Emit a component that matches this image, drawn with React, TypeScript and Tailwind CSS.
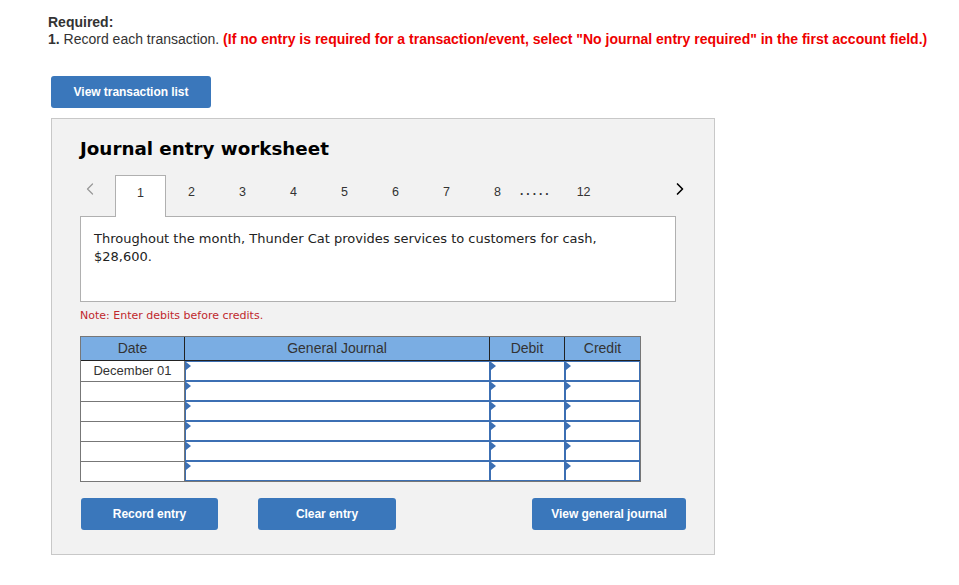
import { ChevronLeft, ChevronRight } from 'lucide-react';

const tabs = ['1', '2', '3', '4', '5', '6', '7', '8'];
const rows = ['December 01', '', '', '', '', ''];

const BlueButton = ({ label, width }: { label: string; width: string }) => (
  <button
    className={`${width} h-8 rounded-[3px] bg-[#3a77bb] text-white text-[12px] font-bold tracking-[-0.05px] font-['Liberation_Sans',Arial,sans-serif]`}
  >
    {label}
  </button>
);

const InputCell = ({ width }: { width: string }) => (
  <div className={`${width} relative h-5 bg-white border border-[#3c6fb3]`}>
    <span className="absolute left-0 top-0 w-0 h-0 border-y-[4px] border-y-transparent border-l-[5px] border-l-[#3c6fb3]" />
  </div>
);

export default function App() {
  return (
    <div className="min-h-screen w-[959px] bg-white pl-12 pt-[14px] font-['Liberation_Sans',Arial,sans-serif] text-[#333]">
      <p className="text-[14px] font-bold leading-[16px]">Required:</p>
      <p className="text-[14px] leading-[18px]">
        <span className="font-bold">1.</span> Record each transaction.{' '}
        <span className="font-bold text-[#ee0000]">
          (If no entry is required for a transaction/event, select "No journal entry required" in the first account field.)
        </span>
      </p>

      <div className="mt-[28px] ml-[3px]">
        <BlueButton label="View transaction list" width="w-[160px]" />
      </div>

      <div className="mt-[10px] ml-[3px] w-[664px] h-[437px] bg-[#f2f2f2] border border-[#c8c8c8] pl-[28px] pt-[19px]">
        <h2 className="text-[18.3px] font-bold text-black leading-[22px] font-['DejaVu_Sans',Verdana,sans-serif]">
          Journal entry worksheet
        </h2>

        <div className="mt-[15px] flex items-start h-[41px] w-[610px] relative">
          <div className="w-[35px] h-full flex items-start pt-[4px] text-[#999]">
            <ChevronLeft className="w-5 h-5" strokeWidth={1.5} />
          </div>
          {tabs.map((t, i) => (
            <div
              key={t}
              className={`w-[51px] flex justify-center pt-[8px] text-[12.5px] text-[#333] ${
                i === 0 ? 'bg-white border-x border-t border-[#b0b0b0] relative z-10 h-[42px]' : 'h-full'
              }`}
            >
              {t}
            </div>
          ))}
          <div className="h-full pt-[7px] text-[12px] text-[#333] tracking-[3px] -ml-[3px] font-bold">.....</div>
          <div className="h-full pt-[8px] text-[12.5px] text-[#333] ml-[25px]">12</div>
          <div className="h-full pt-[4px] ml-auto text-black">
            <ChevronRight className="w-5 h-5" strokeWidth={2} />
          </div>
        </div>

        <div className="w-[596px] h-[86px] bg-white border border-[#b0b0b0] pl-[13px] pr-[60px] pt-[13px] text-[13px] leading-[18px] text-[#222] font-['DejaVu_Sans',Verdana,sans-serif]">
          Throughout the month, Thunder Cat provides services to customers for cash, $28,600.
        </div>

        <p className="mt-[7px] text-[11px] leading-[14px] text-[#c0282d] font-['DejaVu_Sans',Verdana,sans-serif]">
          Note: Enter debits before credits.
        </p>

        <div className="mt-[13px] w-[561px] border border-[#777] text-[13px] text-[#333]">
          <div className="flex h-[24px] bg-[#7aade3] border-b border-[#222] text-[14px]">
            <div className="w-[104px] flex items-center justify-center border-r border-[#222]">Date</div>
            <div className="w-[305px] flex items-center justify-center border-r border-[#222]">General Journal</div>
            <div className="w-[75px] flex items-center justify-center border-r border-[#222]">Debit</div>
            <div className="flex-1 flex items-center justify-center">Credit</div>
          </div>
          {rows.map((d, i) => (
            <div key={i} className="flex">
              <div className={`w-[104px] h-5 bg-white flex items-center justify-center border-r border-[#777] ${i > 0 ? 'border-t border-t-[#777]' : ''}`}>
                {d}
              </div>
              <InputCell width="w-[305px]" />
              <InputCell width="w-[75px]" />
              <InputCell width="flex-1" />
            </div>
          ))}
        </div>

        <div className="mt-[16px] flex items-center w-[606px]">
          <div className="ml-[1px]">
            <BlueButton label="Record entry" width="w-[137px]" />
          </div>
          <div className="ml-[40px]">
            <BlueButton label="Clear entry" width="w-[138px]" />
          </div>
          <div className="ml-auto">
            <BlueButton label="View general journal" width="w-[154px]" />
          </div>
        </div>
      </div>
    </div>
  );
}
